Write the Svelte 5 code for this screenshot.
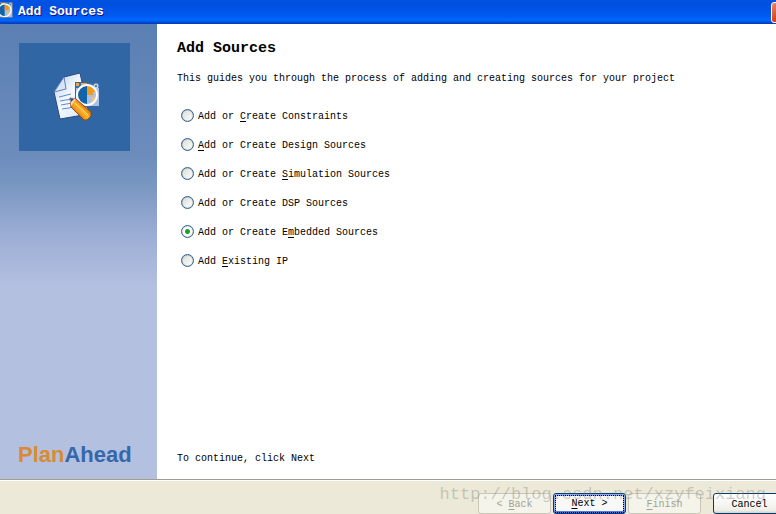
<script>
  const sources = [
    { id: 'constraints', before: 'Add or ', key: 'C', after: 'reate Constraints' },
    { id: 'design', before: '', key: 'A', after: 'dd or Create Design Sources' },
    { id: 'simulation', before: 'Add or Create ', key: 'S', after: 'imulation Sources' },
    { id: 'dsp', before: 'Add or Create DSP Sources', key: '', after: '' },
    { id: 'embedded', before: 'Add or Create E', key: 'm', after: 'bedded Sources' },
    { id: 'ip', before: 'Add ', key: 'E', after: 'xisting IP' }
  ];

  let selected = $state('embedded');
</script>

{#snippet badge()}
  <rect x="0.5" y="0.5" width="24" height="24" fill="#a9bfe6" stroke="#44638f" />
  <path d="M1 1h23v5H1z" fill="#2f72b8" />
  <path d="M1 1h3v3H1zM6 1h6v3H6z" fill="#f3a43c" />
  <circle cx="12" cy="13" r="10" fill="#a9bfe6" />
  <path d="M12 3a10 10 0 0 0 0 20z" fill="#1263a8" />
  <path d="M12 3a10 10 0 0 1 9 7h-3v3h-6z" fill="#f39a16" />
  <path d="M16 15h6l-3 6h-3z" fill="#f5bd79" />
  <circle cx="12" cy="13" r="10" fill="none" stroke="#fff" stroke-width="2" />
  <circle cx="21" cy="4" r="2" fill="#4d82bd" stroke="#fff" />
{/snippet}

<div class="dialog">
  <header class="titlebar">
    <svg class="app-icon" viewBox="0 0 25 25" aria-hidden="true">{@render badge()}</svg>
    <span class="title">Add Sources</span>
    <button class="close" type="button" aria-label="Close">
      <svg viewBox="0 0 12 12" aria-hidden="true">
        <path d="M2 2l8 8M10 2l-8 8" stroke="#fff" stroke-width="2" />
      </svg>
    </button>
  </header>

  <div class="body">
    <aside>
      <div class="banner">
        <svg viewBox="-2 0 50 50" aria-hidden="true">
          <defs>
            <linearGradient id="paper" x1="0" y1="0" x2="1" y2="1">
              <stop offset="0" stop-color="#b5cdf0" />
              <stop offset="0.45" stop-color="#f4f8ff" />
              <stop offset="1" stop-color="#d5e3f8" />
            </linearGradient>
            <linearGradient id="pencil" x1="0" y1="1" x2="1" y2="0">
              <stop offset="0.25" stop-color="#d96f05" />
              <stop offset="0.5" stop-color="#ffb62e" />
              <stop offset="0.75" stop-color="#c96000" />
            </linearGradient>
          </defs>
          <path d="M12 5L28 1l9 41-29 5L2 20z" fill="url(#paper)" stroke="#294a7b" />
          <path d="M12 5l2 12-12 3z" fill="#d8e5f8" stroke="#5e82b7" />
          <path d="M7 25l12-3M8 29l12-2M9 33l11-2M10 37l13-2" stroke="#5c8bd0" stroke-width="1" />
          <g transform="translate(23 10)">{@render badge()}</g>
          <path d="M18 26l6 1 15 13v4l-4 4h-3L19 35z" fill="url(#pencil)" stroke="#8d4a12" />
          <path d="M18 26l6 1-5 7z" fill="#f8d9ac" />
          <path d="M18 26l4 1-3 3z" fill="#174bb0" />
          <path d="M23 31l13 12" stroke="#ffe07b" />
        </svg>
      </div>
      <p class="logo"><span>Plan</span>Ahead</p>
    </aside>

    <main>
      <h1>Add Sources</h1>
      <p>This guides you through the process of adding and creating sources for your project</p>

      <div class="options" role="radiogroup" aria-label="Source type">
        {#each sources as source (source.id)}
          <label>
            <input type="radio" name="source" value={source.id} bind:group={selected} />
            <span>{source.before}<u>{source.key}</u>{source.after}</span>
          </label>
        {/each}
      </div>

      <p class="hint">To continue, click Next</p>
    </main>
  </div>

  <footer>
    <button type="button" disabled>&lt; <u>B</u>ack</button>
    <button type="button" class="default"><span><u>N</u>ext &gt;</span></button>
    <button type="button" disabled><u>F</u>inish</button>
    <button type="button" class="cancel">Cancel</button>
    <span class="watermark">http://blog.csdn.net/xzyfeixiang</span>
  </footer>
</div>

<style>
  :global(body) {
    overflow: hidden;
  }

  /* the right edge of the window runs past the viewport */
  .dialog {
    display: grid;
    grid-template-rows: 24px 1fr auto;
    width: calc(100% + 21px);
    height: 100vh;
    background: #fff;
    color: #000;
    font: 10px/14px 'Liberation Mono', monospace;
  }

  .titlebar {
    display: flex;
    align-items: center;
    gap: 5px;
    padding-right: 5px;
    background: linear-gradient(#0054e0, #0050e0 20%, #0058ee 60%, #0066ff 85%, #0046d0 94%, #003ab8);
  }

  .app-icon {
    width: 16px;
    height: 16px;
    margin: 0 0 4px -3px;
  }

  .title {
    flex: 1;
    color: #fff;
    font-size: 13px;
    font-weight: bold;
    text-shadow: 1px 1px #0f1089;
  }

  .close {
    width: 21px;
    height: 21px;
    padding: 3px;
    border: 1px solid #fff;
    border-radius: 3px;
    background: linear-gradient(135deg, #e98a70, #d9451f 50%, #c03510);
  }

  .close svg {
    display: block;
  }

  .body {
    display: grid;
    grid-template-columns: 157px 1fr;
  }

  aside {
    display: flex;
    flex-direction: column;
    justify-content: space-between;
    padding: 19px 18px 11px;
    background: linear-gradient(#5a7fb3, #6c8cbc 29%, #7896c1 35%, #9badd5 46%, #b4c0e0 58%);
  }

  .banner {
    display: grid;
    place-items: center;
    height: 108px;
    margin: 0 9px 0 1px;
    background: #3166a5;
  }

  .banner svg {
    width: 50px;
    height: 50px;
    overflow: visible;
  }

  .logo {
    margin: 0;
    color: #3468aa;
    font: bold 22px/26px 'Liberation Sans', sans-serif;
  }

  .logo span {
    color: #d98a35;
  }

  main {
    display: flex;
    flex-direction: column;
    padding: 15px 20px 13px;
  }

  h1 {
    margin: 0 0 13px;
    font-size: 15px;
    line-height: 20px;
  }

  p {
    margin: 0;
  }

  .options {
    display: grid;
    gap: 14px;
    margin: 23px 0 0 4px;
  }

  label {
    display: flex;
    align-items: flex-start;
    gap: 4px;
  }

  label span {
    padding-top: 1px;
    white-space: pre;
  }

  input {
    appearance: none;
    width: 13px;
    height: 13px;
    margin: 0;
    border: 1px solid #33628f;
    border-radius: 50%;
    background: linear-gradient(135deg, #dcdcd4, #fff);
    box-shadow: inset 0 0 1px #33628f;
  }

  input:checked {
    background: radial-gradient(circle, #21a121 2px, #fff 3px);
  }

  u {
    text-underline-offset: 2px;
  }

  .hint {
    margin-top: auto;
  }

  footer {
    position: relative;
    display: flex;
    justify-content: flex-end;
    gap: 2px;
    padding: 13px 11px 0 0;
    border-top: 1px solid #9d9d92;
    background: #ece9d8;
    box-shadow: inset 0 1px #fff;
  }

  footer button {
    width: 73px;
    height: 21px;
    padding: 2px 0 0;
    border: 1px solid #003c74;
    border-radius: 3px;
    background: linear-gradient(#fff, #f0f0ea 85%, #d6d0c5);
    color: #000;
    font: inherit;
  }

  footer button:disabled {
    border-color: #c9c7ba;
    background: #f5f4ea;
    color: #a1a192;
  }

  footer .default {
    padding: 0;
    background: #f8f8f6;
    box-shadow:
      inset 0 -2px #5577dd,
      inset 0 0 0 2px #8eaeee;
  }

  .default span {
    display: block;
    margin: 1px;
    border: 1px dotted #000;
    line-height: 16px;
  }

  footer .cancel {
    margin-left: 10px;
  }

  .watermark {
    position: absolute;
    top: 4px;
    right: 31px;
    color: rgb(120 120 110 / 0.35);
    font-size: 17px;
    line-height: 22px;
    pointer-events: none;
  }
</style>
